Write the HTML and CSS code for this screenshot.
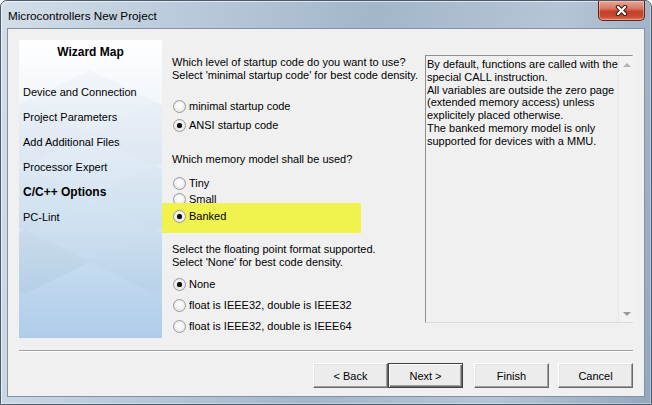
FILE: index.html
```html
<!DOCTYPE html>
<html>
<head>
<meta charset="utf-8">
<title>Microcontrollers New Project</title>
<link rel="stylesheet" href="styles.css">
</head>
<body>
<div class="window">
  <div class="titlebar">
    <span class="title">Microcontrollers New Project</span>
    <div class="close">
      <svg class="close-x" width="13" height="11" viewBox="0 0 13 11">
        <path d="M3 2 L10 9 M10 2 L3 9" stroke="#3d1d17" stroke-width="4.4" stroke-linecap="round" fill="none"/>
        <path d="M3 2 L10 9 M10 2 L3 9" stroke="#ffffff" stroke-width="2.3" stroke-linecap="round" fill="none"/>
      </svg>
    </div>
  </div>
  <div class="client">
    <div class="top">
      <div class="map">
        <svg class="map-bg" width="143" height="298" viewBox="0 0 143 298">
          <polygon points="71,30 136,62 71,94 6,62" fill="#5a7390" fill-opacity="0.035"/>
          <polygon points="136,62 201,94 136,126 71,94" fill="#5a7390" fill-opacity="0.05"/>
          <polygon points="6,62 71,94 6,126 -59,94" fill="#5a7390" fill-opacity="0.05"/>
          <polygon points="71,94 136,126 71,158 6,126" fill="#5a7390" fill-opacity="0.03"/>
          <polygon points="136,126 201,158 136,190 71,158" fill="#5a7390" fill-opacity="0.045"/>
          <polygon points="6,126 71,158 6,190 -59,158" fill="#5a7390" fill-opacity="0.045"/>
          <polygon points="71,158 136,190 71,222 6,190" fill="#5a7390" fill-opacity="0.03"/>
          <polygon points="6,190 71,222 6,254 -59,222" fill="#5a7390" fill-opacity="0.06"/>
          <polygon points="136,190 201,222 136,254 71,222" fill="#5a7390" fill-opacity="0.04"/>
        </svg>
        <div class="map-title">Wizard Map</div>
        <ul class="steps">
          <li>Device and Connection</li>
          <li>Project Parameters</li>
          <li>Add Additional Files</li>
          <li>Processor Expert</li>
          <li class="current">C/C++ Options</li>
          <li>PC-Lint</li>
        </ul>
      </div>
      <div class="main">
        <p class="q q1">Which level of startup code do you want to use?<br>Select 'minimal startup code' for best code density.</p>
        <div class="radio r19 first1"><span class="dot"></span>minimal startup code</div>
        <div class="radio r19"><span class="dot on"></span>ANSI startup code</div>
        <p class="q q2">Which memory model shall be used?</p>
        <div class="radio r17"><span class="dot"></span>Tiny</div>
        <div class="radio r14"><span class="dot"></span>Small</div>
        <div class="hl">
          <div class="radio r13"><span class="dot on"></span>Banked</div>
        </div>
        <p class="q q3">Select the floating point format supported.<br>Select 'None' for best code density.</p>
        <div class="radio r21 first3"><span class="dot on"></span>None</div>
        <div class="radio r21"><span class="dot"></span>float is IEEE32, double is IEEE32</div>
        <div class="radio r21"><span class="dot"></span>float is IEEE32, double is IEEE64</div>
      </div>
      <div class="desc">
        <div class="desc-text">By default, functions are called with the<br>special CALL instruction.<br>All variables are outside the zero page<br>(extended memory access) unless<br>explicitely placed otherwise.<br>The banked memory model is only<br>supported for devices with a MMU.</div>
        <div class="scrollbar">
          <div class="sb-btn"><span class="arrow up"></span></div>
          <div class="sb-btn"><span class="arrow down"></span></div>
        </div>
      </div>
    </div>
    <div class="sep"></div>
    <div class="buttons">
      <button class="btn back">&lt; Back</button>
      <button class="btn next default">Next &gt;</button>
      <button class="btn finish">Finish</button>
      <button class="btn cancel">Cancel</button>
    </div>
  </div>
</div>
</body>
</html>
```

FILE: styles.css
```css
* { box-sizing: border-box; }
html, body { margin: 0; padding: 0; }
body {
  width: 652px;
  height: 405px;
  overflow: hidden;
  background: #ffffff;
  font-family: "Liberation Sans", Arial, sans-serif;
  font-size: 11px;
  color: #000;
}
.window {
  width: 652px;
  height: 405px;
  border: 1px solid #4b5b6e;
  border-radius: 7px 7px 0 0;
  background: linear-gradient(100deg, #d3dee9 0%, #b8c8d9 28%, #a3b6ca 52%, #b6c5d5 78%, #93a7bd 100%);
  box-shadow: inset 1px 1px 0 rgba(255,255,255,0.6), inset -1px -1px 0 rgba(255,255,255,0.35);
  display: flex;
  flex-direction: column;
}
.titlebar {
  height: 27px;
  display: flex;
  align-items: flex-start;
  justify-content: space-between;
  padding-left: 7px;
}
.title {
  font-size: 11.7px;
  line-height: 27px;
  margin-top: 1px;
  color: #000;
}
.close {
  width: 47px;
  height: 20px;
  margin-right: 6px;
  border: 1px solid #5e261c;
  border-top: none;
  border-radius: 0 0 5px 5px;
  background: linear-gradient(#e9a898 0%, #d77562 40%, #c4412a 55%, #c8492f 80%, #d9765c 100%);
  box-shadow: inset 0 0 0 1px rgba(255,210,200,0.45);
  display: flex;
  align-items: center;
  justify-content: center;
}
.client {
  flex: 1;
  margin: 0 6px 7px 6px;
  border: 1px solid #8192a5;
  background: #f0f0f0;
  padding: 11px 11px 8px 11px;
  display: flex;
  flex-direction: column;
}
.top {
  display: flex;
  height: 298px;
}
.map {
  width: 143px;
  flex: none;
  position: relative;
  overflow: hidden;
  background: linear-gradient(#ffffff 0%, #f1f6fb 22%, #d9e8f5 55%, #aecce9 100%);
}
.map-bg {
  position: absolute;
  left: 0;
  top: 0;
}
.map-title {
  position: relative;
  text-align: center;
  font-weight: bold;
  font-size: 12px;
  line-height: 13px;
  padding-top: 6px;
}
.steps {
  position: relative;
  list-style: none;
  margin: 21px 0 0 0;
  padding: 0 0 0 4px;
}
.steps li {
  height: 25px;
  line-height: 25px;
  white-space: nowrap;
}
.steps li.current {
  font-weight: bold;
  font-size: 12px;
}
.main {
  width: 263px;
  flex: none;
  padding-left: 10px;
  display: flex;
  flex-direction: column;
}
.q {
  margin: 0;
  line-height: 13px;
  white-space: nowrap;
}
.q1 { margin-top: 16px; }
.q2 { margin-top: 18px; }
.q3 { margin-top: 10px; }
.radio {
  display: flex;
  align-items: center;
  gap: 3px;
  margin-left: 1px;
  white-space: nowrap;
}
.r19 { height: 19px; line-height: 19px; }
.r17 { height: 17px; line-height: 17px; margin-top: 9px; }
.r14 { height: 14px; line-height: 14px; }
.r13 { height: 13px; line-height: 13px; }
.r21 { height: 21px; line-height: 21px; }
.first1 { margin-top: 15px; }
.first3 { margin-top: 5px; }
.hl {
  margin: -3px 0 0 -10px;
  width: 199px;
  height: 30px;
  padding: 7px 0 0 10px;
  background: #f2f24e;
}
.dot {
  width: 13px;
  height: 13px;
  flex: none;
  border-radius: 50%;
  border: 1px solid #9a9a9a;
  background: radial-gradient(circle at 50% 40%, #ffffff 0%, #f4f4f4 45%, #d6d6d6 100%);
  box-shadow: inset 0 0 0 1px #ececec;
  display: flex;
  align-items: center;
  justify-content: center;
}
.dot.on::after {
  content: "";
  width: 5px;
  height: 5px;
  border-radius: 50%;
  background: #111;
  box-shadow: 0 0 1px #555;
}
.desc {
  width: 208px;
  height: 268px;
  margin-top: 15px;
  flex: none;
  border: 1px solid;
  border-color: #8f8f8f #dadada #dadada #8f8f8f;
  display: flex;
}
.desc-text {
  flex: 1;
  padding: 2px 0 0 1px;
  line-height: 12.8px;
  white-space: nowrap;
}
.scrollbar {
  width: 17px;
  flex: none;
  background: #f2f2f2;
  border-left: 1px solid #e6e6e6;
  display: flex;
  flex-direction: column;
  justify-content: space-between;
}
.sb-btn {
  height: 17px;
  display: flex;
  align-items: center;
  justify-content: center;
}
.arrow {
  width: 0;
  height: 0;
  border-left: 4px solid transparent;
  border-right: 4px solid transparent;
}
.arrow.up { border-bottom: 4px solid #b4b4b4; }
.arrow.down { border-top: 4px solid #9a9a9a; }
.sep {
  margin-top: 12px;
  height: 2px;
  border-top: 1px solid #a0a0a0;
  border-bottom: 1px solid #ffffff;
}
.buttons {
  display: flex;
  justify-content: flex-end;
  margin-top: 11px;
}
.btn {
  width: 75px;
  height: 25px;
  padding: 0;
  font-family: "Liberation Sans", Arial, sans-serif;
  font-size: 11px;
  color: #000;
  background: #ececec;
  border: 1px solid;
  border-color: #ffffff #696969 #696969 #ffffff;
  box-shadow: inset -1px -1px 0 #a0a0a0, inset 1px 1px 0 #e3e3e3;
}
.btn.default {
  border: 1px solid #404040;
  box-shadow: inset 1px 1px 0 #ffffff, inset -1px -1px 0 #696969, inset -2px -2px 0 #a0a0a0;
}
.btn.next { margin-right: 11px; }
.btn.finish { margin-right: 9px; }
```
